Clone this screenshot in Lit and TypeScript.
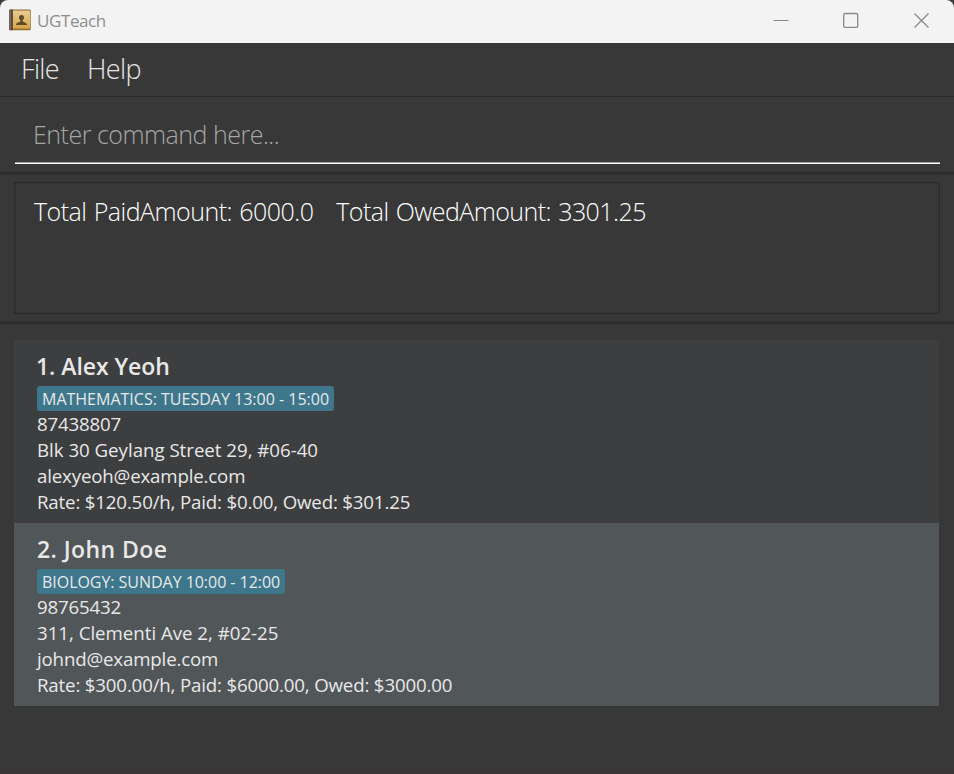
import { LitElement, html, css, svg } from "lit";
import { customElement, property } from "lit/decorators.js";

interface Student {
  name: string;
  tag: string;
  phone: string;
  address: string;
  email: string;
  fees: string;
}

const students: Student[] = [
  {
    name: "Alex Yeoh",
    tag: "MATHEMATICS: TUESDAY 13:00 - 15:00",
    phone: "87438807",
    address: "Blk 30 Geylang Street 29, #06-40",
    email: "alexyeoh@example.com",
    fees: "Rate: $120.50/h, Paid: $0.00, Owed: $301.25",
  },
  {
    name: "John Doe",
    tag: "BIOLOGY: SUNDAY 10:00 - 12:00",
    phone: "98765432",
    address: "311, Clementi Ave 2, #02-25",
    email: "johnd@example.com",
    fees: "Rate: $300.00/h, Paid: $6000.00, Owed: $3000.00",
  },
];

const bookIcon = svg`
  <svg width="22" height="22" viewBox="0 0 22 22">
    <defs>
      <linearGradient id="cover" x1="0" y1="0" x2="0" y2="1">
        <stop offset="0" stop-color="#e9cb92" />
        <stop offset="1" stop-color="#d9a548" />
      </linearGradient>
    </defs>
    <rect x="0.3" y="0.6" width="21.4" height="20.7" rx="1" fill="#8f6c35" />
    <rect x="4" y="1.6" width="17" height="18" fill="url(#cover)" />
    <rect x="0.3" y="0.6" width="3.7" height="20.7" rx="0.8" fill="#5d4b43" />
    <rect x="1.1" y="1.6" width="0.8" height="18.7" fill="#86756b" />
    <path
      d="M12.500 5.900c1.600 0 2.500 1.100 2.500 2.700 0 1.200-.6 2-1.300 2.600v1.400c.6 1 4.200.7 4.300 3.300H7c.1-2.600 3.700-2.300 4.300-3.300v-1.400c-.7-.6-1.300-1.400-1.300-2.600 0-1.600.9-2.700 2.500-2.700z"
      fill="#5e4a2b"
    />
  </svg>`;

@customElement("title-bar")
class TitleBar extends LitElement {
  static styles = css`
    :host {
      display: flex;
      align-items: center;
      height: 43px;
      box-sizing: border-box;
      padding: 0 0 3px 9px;
      background: #f3f3f3;
      border-radius: 8px 8px 0 0;
      color: #8e8e8e;
    }
    svg {
      display: block;
    }
    .name {
      flex: 1;
      margin-left: 6px;
      padding-top: 2px;
      font-size: 17px;
      letter-spacing: -0.4px;
      line-height: 24px;
    }
    .controls {
      display: flex;
      padding-right: 25px;
      gap: 54px;
    }
  `;
  render() {
    return html`
      ${bookIcon}
      <span class="name">UGTeach</span>
      <div class="controls">
        <svg width="16" height="16"><path d="M0.500 8.500H15.500" stroke="#8a8a8a" /></svg>
        <svg width="16" height="16">
          <rect x="0.700" y="1.500" width="14" height="14" rx="1.500" fill="none" stroke="#8a8a8a" stroke-width="1.300" />
        </svg>
        <svg width="16" height="16"><path d="M1.500 1.500L15.500 15.500M15.500 1.500L1.500 15.500" stroke="#8a8a8a" stroke-width="1.300" /></svg>
      </div>
    `;
  }
}

@customElement("student-card")
class StudentCard extends LitElement {
  @property({ type: Number }) index = 1;
  @property({ attribute: false }) student!: Student;

  static styles = css`
    :host {
      display: flex;
      flex-direction: column;
      align-items: flex-start;
      height: 183px;
      box-sizing: border-box;
      padding: 10px 23px 0;
      background: #3c3e3f;
      color: #e8e8e8;
      font-size: 18.700px;
    }
    .name {
      margin: 0 0 4px -1px;
      font-size: 23px;
      font-weight: 600;
      letter-spacing: -0.05px;
      line-height: 32px;
    }
    .tag {
      height: 25px;
      box-sizing: border-box;
      padding: 0 5px;
      border-radius: 3px;
      background: #3e778c;
      font-size: 16px;
      line-height: 26px;
    }
    .line {
      line-height: 26px;
      letter-spacing: -0.17px;
    }
    .address {
      letter-spacing: -0.02px;
    }
    :host(.even) {
      background: #515658;
    }
    :host(.even) .name {
      margin-left: 0;
      letter-spacing: 0.42px;
    }
    :host(.even) .tag {
      letter-spacing: -0.04px;
    }
  `;
  render() {
    const s = this.student;
    return html`
      <div class="name">${this.index}. ${s.name}</div>
      <div class="tag">${s.tag}</div>
      <div class="line">${s.phone}</div>
      <div class="line address">${s.address}</div>
      <div class="line">${s.email}</div>
      <div class="line">${s.fees}</div>
    `;
  }
}

@customElement("app-root")
class AppRoot extends LitElement {
  static styles = css`
    :host {
      display: flex;
      flex-direction: column;
      width: 954px;
      height: 774px;
      box-sizing: border-box;
      overflow: hidden;
      background: #383838;
      border-bottom: 1px solid #3c3437;
      font-family: "Open Sans", "Noto Sans", sans-serif;
    }
    :host > * {
      flex: none;
    }
    .frame {
      background: #3f3c3b;
    }
    .menu {
      display: flex;
      gap: 28px;
      height: 54px;
      box-sizing: border-box;
      padding: 0 21px;
      border-bottom: 1px solid #2b2b2b;
      font-size: 27px;
      font-weight: 300;
      letter-spacing: -0.65px;
      line-height: 52px;
      color: #e6e6e6;
    }
    .command {
      height: 74px;
      box-sizing: border-box;
      padding: 10px 14px 0 15px;
    }
    .field {
      height: 57px;
      box-sizing: border-box;
      padding-left: 18px;
      border-bottom: 1px solid #fff;
      box-shadow: inset 0 -1px #a0a0a0;
      font-size: 25px;
      font-weight: 300;
      letter-spacing: -0.5px;
      line-height: 54px;
      color: #a6a6a6;
    }
    .splitter {
      height: 2px;
      background: #2c2c2c;
      border: 1px solid #323232;
      border-width: 1px 0;
    }
    .result {
      height: 132px;
      margin: 7px 14px;
      box-sizing: border-box;
      border: 1px solid #2b2b2b;
      box-shadow: inset 0 0 0 1px #333;
      padding: 10px 19px;
      font-size: 25px;
      font-weight: 300;
      letter-spacing: -0.52px;
      word-spacing: 1.300px;
      line-height: 36px;
      white-space: pre;
      color: #fff;
    }
    .owed {
      margin-left: 1px;
      letter-spacing: -0.56px;
    }
    .list {
      margin: 15px 15px 0 14px;
    }
  `;
  render() {
    return html`
      <div class="frame"><title-bar></title-bar></div>
      <nav class="menu"><span>File</span><span>Help</span></nav>
      <div class="command"><div class="field">Enter command here...</div></div>
      <div class="splitter"></div>
      <div class="result">Total PaidAmount: 6000.0   <span class="owed">Total OwedAmount: 3301.25</span></div>
      <div class="splitter"></div>
      <div class="list">
        ${students.map(
          (s, i) => html`<student-card class=${i % 2 ? "even" : "odd"} .index=${i + 1} .student=${s}></student-card>`
        )}
      </div>
    `;
  }
}
